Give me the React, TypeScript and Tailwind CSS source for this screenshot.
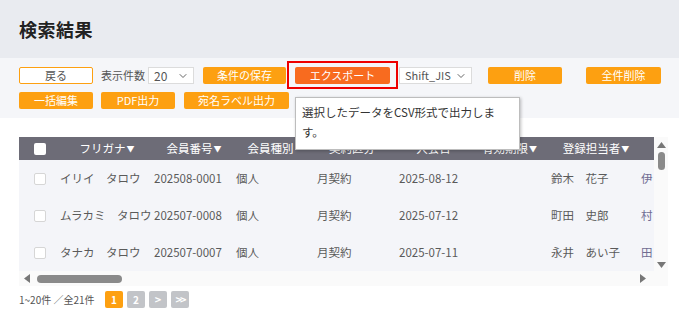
import { ChevronDown } from "lucide-react";

const font = { fontFamily: '"Noto Sans CJK JP", "Noto Sans", sans-serif' };

const cols = "grid grid-cols-[35px_94px_82px_81px_82px_81px_71px_90px_60px] w-max";

const rows = [
  ["イリイ　タロウ", "202508-0001", "個人", "月契約", "2025-08-12", "", "鈴木　花子", "伊"],
  ["ムラカミ　タロウ", "202507-0008", "個人", "月契約", "2025-07-12", "", "町田　史郎", "村"],
  ["タナカ　タロウ", "202507-0007", "個人", "月契約", "2025-07-11", "", "永井　あい子", "田"],
];

function Btn({ label, w, cls = "" }: { label: string; w: string; cls?: string }) {
  return (
    <button
      className={`${w} block shrink-0 h-[17px] rounded-[2px] bg-[#fda011] text-white text-[11px] leading-[17px] text-center ${cls}`}
    >
      {label}
    </button>
  );
}

function Head({ label, sort, cls = "" }: { label: string; sort?: boolean; cls?: string }) {
  return (
    <div className={`flex items-center justify-center text-white text-[11.5px] whitespace-nowrap ${cls}`}>
      {label}
      {sort && <span className="ml-[1px] text-[8px]">▼</span>}
    </div>
  );
}

export default function App() {
  return (
    <div className="w-[679px] h-[318px] bg-white overflow-hidden text-[#555]" style={font}>
      <div className="h-[58px] bg-[#e9ebf0] px-[19px] flex items-center">
        <h1 className="text-[18px] font-bold text-[#222] tracking-[0.5px]">検索結果</h1>
      </div>

      <div className="relative bg-[#f5f6f9] px-[19px] pt-[9px] pb-[9px]">
        <div className="flex items-center h-[17px]">
          <button className="block shrink-0 w-[74px] h-[17px] rounded-[2px] border border-[#fda011] bg-white text-[#555] text-[11px] leading-[15px]">
            戻る
          </button>
          <span className="ml-[8px] shrink-0 whitespace-nowrap text-[11px] leading-[17px] text-[#555]">表示件数</span>
          <div className="ml-[3px] shrink-0 w-[46px] h-[17px] bg-white border border-[#dcdcdc] flex items-center justify-between pl-[5px] pr-[4px] text-[12px] text-[#555]">
            20
            <ChevronDown size={12} strokeWidth={2} className="text-[#666]" />
          </div>
          <Btn label="条件の保存" w="w-[83px]" cls="ml-[9px]" />
          <div className="relative flex shrink-0 ml-[9px]">
            <button className="block w-[95px] h-[17px] rounded-[2px] bg-[#f86b1f] text-white text-[11px] leading-[17px]">
              エクスポート
            </button>
            <span className="absolute -left-[8px] -top-[6px] w-[111px] h-[28px] border-2 border-[#ee0000] pointer-events-none" />
          </div>
          <div className="ml-[9px] shrink-0 w-[73px] h-[17px] bg-white border border-[#dcdcdc] flex items-center justify-between pl-[5px] pr-[4px] text-[11px] text-[#555]">
            Shift_JIS
            <ChevronDown size={12} strokeWidth={2} className="text-[#666]" />
          </div>
          <Btn label="削除" w="w-[74px]" cls="ml-[16px]" />
          <Btn label="全件削除" w="w-[75px]" cls="ml-[24px]" />
        </div>
        <div className="flex items-center h-[17px] mt-[8px]">
          <Btn label="一括編集" w="w-[74px]" />
          <Btn label="PDF出力" w="w-[74px]" cls="ml-[8px]" />
          <Btn label="宛名ラベル出力" w="w-[105px]" cls="ml-[9px]" />
        </div>

        <div className="absolute left-[295px] top-[39px] w-[225px] h-[53px] z-10 bg-white border border-[#bdbdbd] shadow-[1px_1px_3px_rgba(0,0,0,0.25)] px-[6px] pt-[4px] text-[11.5px] leading-[20px] text-[#333]">
          選択したデータをCSV形式で出力しま
          <br />
          す。
        </div>
      </div>

      <div className="mt-[19px] mx-[19px] w-[649px]">
        <div className="flex">
          <div className="w-[635px] overflow-hidden">
            <div className={`${cols} h-[23px] bg-[#6d6c77]`}>
              <div className="flex items-center pl-[15px]">
                <span className="w-[12px] h-[12px] bg-white rounded-[2px]" />
              </div>
              <Head label="フリガナ" sort cls="pl-[12px]" />
              <Head label="会員番号" sort cls="pl-[10px]" />
              <Head label="会員種別" />
              <Head label="契約区分" />
              <Head label="入会日" />
              <Head label="有効期限" sort />
              <Head label="登録担当者" sort cls="pl-[12px]" />
              <Head label="" />
            </div>
            {rows.map((r, i) => (
              <div key={i} className={`${cols} h-[37px] bg-[#f4f5f9] text-[11.5px] text-[#5a5a5a]`}>
                <div className="flex items-center pl-[15px]">
                  <span className="w-[12px] h-[12px] bg-white border border-[#d6d6d6] rounded-[2px]" />
                </div>
                {r.map((c, j) => (
                  <div
                    key={j}
                    className={`flex items-center pl-[6px] whitespace-nowrap ${j === 7 ? "text-[#6f6c92]" : ""}`}
                  >
                    {c}
                  </div>
                ))}
              </div>
            ))}
          </div>
          <div className="w-[14px] bg-[#fafafa] flex flex-col items-center pt-[5px]">
            <svg width="9" height="6" viewBox="0 0 9 6">
              <path d="M4.5 0 L9 6 L0 6 Z" fill="#777" />
            </svg>
            <span className="mt-[4px] w-[7px] h-[18px] rounded-full bg-[#8a8a8a]" />
            <svg className="mt-auto mb-[3px]" width="9" height="6" viewBox="0 0 9 6">
              <path d="M0 0 L9 0 L4.5 6 Z" fill="#777" />
            </svg>
          </div>
        </div>
        <div className="h-[15px] bg-[#fafafa] flex items-center pl-[5px] pr-[22px]">
          <svg width="6" height="9" viewBox="0 0 6 9">
            <path d="M0 4.5 L6 0 L6 9 Z" fill="#777" />
          </svg>
          <span className="ml-[7px] w-[85px] h-[8px] rounded-full bg-[#8a8a8a]" />
          <svg className="ml-auto" width="6" height="9" viewBox="0 0 6 9">
            <path d="M0 0 L6 4.5 L0 9 Z" fill="#777" />
          </svg>
        </div>
      </div>

      <div className="flex items-center px-[19px] mt-[5px]">
        <span className="text-[10px] text-[#555] w-[86px]">1~20件 ／全21件</span>
        <div className="flex gap-[4px]">
          <span className="w-[18px] h-[17px] rounded-[2px] bg-[#fda011] text-white text-[10px] font-bold flex items-center justify-center">1</span>
          <span className="w-[18px] h-[17px] rounded-[2px] bg-[#c2c4c8] text-white text-[10px] font-bold flex items-center justify-center">2</span>
          <span className="w-[18px] h-[17px] rounded-[2px] bg-[#c2c4c8] text-white text-[11px] font-bold flex items-center justify-center">&gt;</span>
          <span className="w-[18px] h-[17px] rounded-[2px] bg-[#c2c4c8] text-white text-[11px] font-bold flex items-center justify-center tracking-[-2px]">&gt;&gt;</span>
        </div>
      </div>
    </div>
  );
}
